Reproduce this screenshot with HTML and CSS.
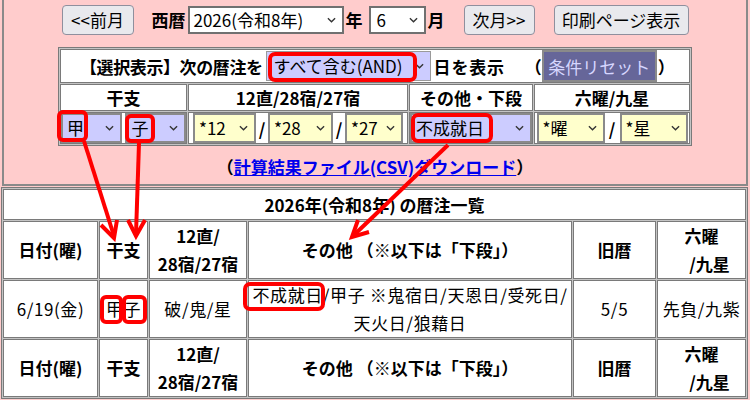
FILE: index.html
```html
<!DOCTYPE html>
<html lang="ja">
<head>
<meta charset="utf-8">
<title>暦注一覧</title>
<link rel="stylesheet" href="styles.css">
</head>
<body>
<div class="page">
  <div class="panel">
    <div class="nav">
      <button class="btn b-prev">&lt;&lt;前月</button>
      <span class="lbl l-seireki">西暦</span>
      <span class="sel s-year">2026(令和8年)<svg class="chev" viewBox="0 0 10 6"><path d="M1 1l4 4 4-4"/></svg></span>
      <span class="lbl l-nen">年</span>
      <span class="sel s-month">6<svg class="chev" viewBox="0 0 10 6"><path d="M1 1l4 4 4-4"/></svg></span>
      <span class="lbl l-tsuki">月</span>
      <button class="btn b-next">次月&gt;&gt;</button>
      <button class="btn b-print">印刷ページ表示</button>
    </div>

    <table class="filter">
      <colgroup><col class="fc1"><col class="fc2"><col class="fc3"><col class="fc4"></colgroup>
      <tr>
        <td colspan="4" class="f-title"><div class="titlerow"><span class="t1">【選択表示】次の暦注を</span><span class="sel s-and">すべて含む(AND)<svg class="chev" viewBox="0 0 10 6"><path d="M1 1l4 4 4-4"/></svg></span><span class="t2">日を表示</span><span class="t3">（</span><button class="reset">条件リセット</button><span class="t4">）</span></div></td>
      </tr>
      <tr class="f-head">
        <th>干支</th><th>12直/28宿/27宿</th><th>その他・下段</th><th>六曜/九星</th>
      </tr>
      <tr class="f-sel">
        <td><div class="cellrow"><span class="sel p s-kan">甲<svg class="chev" viewBox="0 0 10 6"><path d="M1 1l4 4 4-4"/></svg></span><span class="sel p s-shi">子<svg class="chev" viewBox="0 0 10 6"><path d="M1 1l4 4 4-4"/></svg></span></div></td>
        <td><div class="cellrow"><span class="sel y s-12">*12<svg class="chev" viewBox="0 0 10 6"><path d="M1 1l4 4 4-4"/></svg></span><span class="slash">/</span><span class="sel y s-28">*28<svg class="chev" viewBox="0 0 10 6"><path d="M1 1l4 4 4-4"/></svg></span><span class="slash">/</span><span class="sel y s-27">*27<svg class="chev" viewBox="0 0 10 6"><path d="M1 1l4 4 4-4"/></svg></span></div></td>
        <td><div class="cellrow"><span class="sel p s-other">不成就日<svg class="chev" viewBox="0 0 10 6"><path d="M1 1l4 4 4-4"/></svg></span></div></td>
        <td><div class="cellrow"><span class="sel y s-you">*曜<svg class="chev" viewBox="0 0 10 6"><path d="M1 1l4 4 4-4"/></svg></span><span class="slash s2">/</span><span class="sel y s-sei">*星<svg class="chev" viewBox="0 0 10 6"><path d="M1 1l4 4 4-4"/></svg></span></div></td>
      </tr>
    </table>

    <div class="csv">（<a href="#" class="csv-link">計算結果ファイル(CSV)ダウンロード</a>）</div>
  </div>

  <table class="res">
    <colgroup><col class="r1"><col class="r2"><col class="r3"><col class="r4"><col class="r5"><col class="r6"></colgroup>
    <tr><th colspan="6" class="ttl">2026年(令和8年) の暦注一覧</th></tr>
    <tr class="hd">
      <th>日付(曜)</th><th>干支</th><th>12直/<br>28宿/27宿</th><th>その他 （※以下は「下段」）</th><th>旧暦</th><th><span class="blk">六曜</span><span class="blk ind">/九星</span></th>
    </tr>
    <tr class="dt">
      <td>6/19(金)</td><td>甲子</td><td>破/鬼/星</td><td>不成就日/甲子 ※鬼宿日/天恩日/受死日/<br>天火日/狼藉日</td><td>5/5</td><td>先負/九紫</td>
    </tr>
    <tr class="hd">
      <th>日付(曜)</th><th>干支</th><th>12直/<br>28宿/27宿</th><th>その他 （※以下は「下段」）</th><th>旧暦</th><th><span class="blk">六曜</span><span class="blk ind">/九星</span></th>
    </tr>
  </table>

  <svg class="anno" width="750" height="400" viewBox="0 0 750 400">
    <g fill="none" stroke="#f00" stroke-width="4" stroke-linejoin="round">
      <rect x="270" y="54" width="145" height="26" rx="5"/>
      <rect x="59" y="112" width="27" height="28" rx="4"/>
      <rect x="127" y="116" width="26" height="25" rx="4"/>
      <rect x="413" y="115" width="78" height="26" rx="5"/>
      <rect x="102" y="297" width="19" height="25" rx="4"/>
      <rect x="124" y="297" width="21" height="25" rx="4"/>
      <rect x="245" y="284" width="78" height="25" rx="5"/>
    </g>
    <g fill="none" stroke="#f00" stroke-width="4" stroke-linecap="butt" stroke-linejoin="miter">
      <line x1="84" y1="141" x2="114" y2="236"/>
      <polyline points="101,225 114,238 117,220"/>
      <line x1="139" y1="143" x2="136" y2="234"/>
      <polyline points="128,220 136,236 145,220"/>
      <line x1="448" y1="145" x2="354" y2="235"/>
      <polyline points="358,220 352,237 369,232"/>
    </g>
  </svg>
</div>
</body>
</html>
```

FILE: styles.css
```css
* { box-sizing: border-box; }
html, body { margin: 0; padding: 0; }
body {
  width: 750px;
  height: 400px;
  overflow: hidden;
  font-family: "Noto Sans CJK JP", "Noto Sans", sans-serif;
  font-size: 17px;
  color: #000;
  background: #ffcccc;
}
.page {
  position: relative;
  width: 750px;
  height: 400px;
  background: #ffcccc;
}

/* top panel */
.panel {
  margin-left: 2px;
  width: 746px;
  background: #ffcccc;
  border: 2px solid #8a8a8a;
  border-top: none;
  padding-top: 5px;
  padding-bottom: 2px;
}
.nav {
  display: flex;
  justify-content: center;
  align-items: center;
  height: 30px;
}
.btn {
  font-family: inherit;
  font-size: 17px;
  height: 30px;
  padding: 0;
  background: #e9e9ed;
  border: 1px solid #8f8f9d;
  border-radius: 4px;
  color: #000;
  line-height: 28px;
}
.b-prev { width: 72px; }
.b-next { width: 71px; margin-left: 19px; }
.b-print { width: 135px; margin-left: 19px; }
.lbl { font-weight: bold; line-height: 30px; }
.l-seireki { margin-left: 18px; margin-right: 2px; }
.l-nen { margin-left: 2px; margin-right: 6px; }
.l-tsuki { margin-left: 2px; }

.sel {
  display: inline-flex;
  align-items: center;
  justify-content: space-between;
  height: 28px;
  border: 2px solid #707070;
  background: #fff;
  padding: 0 6px 0 4px;
  font-weight: normal;
  line-height: 24px;
  white-space: nowrap;
}
.chev {
  width: 9px;
  height: 6px;
  fill: none;
  stroke: #333;
  stroke-width: 1.5;
  flex: none;
}
.s-year { width: 156px; }
.s-month { width: 57px; padding-left: 6px; }

/* filter table */
.filter {
  margin: 12px auto 0;
  width: 634px;
  table-layout: fixed;
  border-collapse: separate;
  border-spacing: 1px;
  background: #c4c4c4;
  border: 1px solid #7a7a7a;
}
.fc1 { width: 127px; }
.fc2 { width: 220px; }
.fc3 { width: 124px; }
.filter td, .filter th {
  background: #fff;
  border: 1px solid #7a7a7a;
  padding: 0;
}
.f-title {
  font-weight: bold;
  height: 34px;
  white-space: nowrap;
}
.titlerow {
  display: flex;
  align-items: center;
  padding-left: 19px;
  height: 32px;
}
.t1 { letter-spacing: -0.4px; }
.t2 { margin-left: 3px; letter-spacing: 0.8px; }
.t3 { margin-left: 20px; }
.t4 { margin-left: 1px; }
.s-and {
  width: 165px;
  height: 30px;
  background: #ccccff;
  border: 1px solid #9a9a9a;
  padding-left: 7px;
  font-weight: normal;
  margin-left: 3px;
}
.reset {
  font-family: inherit;
  font-size: 17px;
  font-weight: normal;
  height: 32px;
  width: 115px;
  padding: 0;
  background: #666699;
  color: #d6d6ff;
  border: 2px solid #8a8a8a;
}
.f-head th {
  font-weight: bold;
  height: 27px;
  line-height: 25px;
  text-align: center;
}
.f-sel td { height: 32px; }
.cellrow {
  display: flex;
  justify-content: center;
  align-items: center;
  height: 30px;
}
.f-sel .sel { height: 30px; border: 2px solid #8a8a8a; }
.sel.p { background: #ccccff; }
.sel.y { background: #ffffcc; }
.s-kan { width: 63px; }
.s-shi { width: 62px; margin-left: 3px; }
.s-12 { width: 63px; }
.s-28 { width: 65px; }
.s-27 { width: 58px; }
.s-other { width: 122px; }
.s-you { width: 68px; }
.s-sei { width: 68px; }
.slash { width: 12px; text-align: center; font-weight: bold; }
.s2 { width: 15px; }

.csv {
  text-align: center;
  font-weight: bold;
  height: 34px;
  line-height: 38px;
  margin-top: 2px;
}
.csv-link { color: #0000ee; text-decoration: underline; }

/* result table */
.res {
  margin-left: 1px;
  margin-top: 1px;
  width: 747px;
  table-layout: fixed;
  border-collapse: separate;
  border-spacing: 1px;
  background: #c4c4c4;
  border: 1px solid #7a7a7a;
}
.r1 { width: 95px; }
.r2 { width: 49px; }
.r3 { width: 98px; }
.r4 { width: 324px; }
.r5 { width: 83px; }
.res th, .res td {
  background: #fff;
  border: 1px solid #7a7a7a;
  padding: 0;
  text-align: center;
  line-height: 28px;
}
.res th { font-weight: bold; }
.ttl { height: 31px; }
.hd th { height: 57px; }
.dt td { height: 57px; font-weight: normal; letter-spacing: 0.6px; }
.blk { display: block; }
.ind { padding-left: 16px; }

/* annotations */
.anno {
  position: absolute;
  left: 0;
  top: 0;
  pointer-events: none;
}
```
